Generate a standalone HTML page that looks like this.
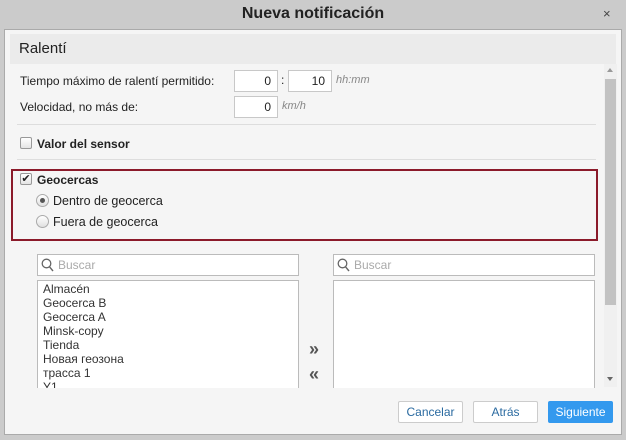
<!DOCTYPE html>
<html><head><meta charset="utf-8"><style>
*{box-sizing:border-box}
body{margin:0;width:626px;height:440px;background:#cbcbcb;font-family:"Liberation Sans",Arial,sans-serif;font-size:12px;color:#222;position:relative;overflow:hidden}
.a{position:absolute}
.title{left:0;top:0;width:626px;height:28px;text-align:center;font-weight:bold;font-size:16px;line-height:28px;color:#222}
.panel{left:4px;top:29px;width:618px;height:406px;background:#f5f5f5;border:1px solid #aaa}
.inp{background:#fff;border:1px solid #c8c8c8;height:22px;text-align:right;padding-right:6px;line-height:20px;font-size:12px}
.unit{color:#888;font-style:italic;font-size:11px}
.sep{height:1px;background:#ddd}
.cb{width:12px;height:12px;border:1px solid #999;border-radius:2px;background:linear-gradient(#fff,#e4e4e4)}
.rd{width:13px;height:13px;border:1px solid #aaa;border-radius:50%;background:linear-gradient(#fff,#e0e0e0)}
.btn{height:22px;border:1px solid #ccc;background:#fff;color:#2a6aa0;text-align:center;line-height:20px;font-size:12px;border-radius:2px}
.list div{height:14px;line-height:14px}
</style></head><body>
<div class="a title">Nueva notificación</div>
<div class="a" style="left:603px;top:6px;font-size:13px;color:#444">×</div>
<div class="a panel"></div>
<div class="a" style="left:10px;top:34px;width:606px;height:30px;background:#ebebeb;font-size:15px;line-height:30px;padding-left:9px">Ralentí</div>
<div class="a" style="left:604px;top:64px;width:13px;height:323px;background:#f0f0f0"></div>
<div class="a" style="left:605px;top:79px;width:11px;height:226px;background:#c2c2c2"></div>
<div class="a" style="left:607px;top:68px;border:3px solid transparent;border-bottom:4px solid #999;border-top:0"></div>
<div class="a" style="left:607px;top:377px;border:3px solid transparent;border-top:4px solid #666;border-bottom:0"></div>

<div class="a" style="left:20px;top:74px">Tiempo máximo de ralentí permitido:</div>
<div class="a inp" style="left:234px;top:70px;width:44px">0</div>
<div class="a" style="left:281px;top:73px">:</div>
<div class="a inp" style="left:288px;top:70px;width:44px">10</div>
<div class="a unit" style="left:336px;top:74px">hh:mm</div>
<div class="a" style="left:20px;top:100px">Velocidad, no más de:</div>
<div class="a inp" style="left:234px;top:96px;width:44px">0</div>
<div class="a unit" style="left:282px;top:100px">km/h</div>
<div class="a sep" style="left:17px;top:124px;width:579px"></div>
<div class="a cb" style="left:20px;top:137px"></div>
<div class="a" style="left:37px;top:137px;font-weight:bold">Valor del sensor</div>
<div class="a sep" style="left:17px;top:159px;width:579px"></div>

<div class="a" style="left:11px;top:169px;width:587px;height:72px;border:2px solid #8b1a2a"></div>
<div class="a cb" style="left:20px;top:173px;font-size:11px;line-height:10px;text-align:center">✔</div>
<div class="a" style="left:37px;top:173px;font-weight:bold">Geocercas</div>
<div class="a rd" style="left:36px;top:194px"><div style="width:5px;height:5px;border-radius:50%;background:#555;margin:3px"></div></div>
<div class="a" style="left:53px;top:194px;font-size:12.5px">Dentro de geocerca</div>
<div class="a rd" style="left:36px;top:215px"></div>
<div class="a" style="left:53px;top:215px;font-size:12.5px">Fuera de geocerca</div>

<div class="a" style="left:37px;top:254px;width:262px;height:22px;background:#fff;border:1px solid #bbb;color:#aaa;line-height:20px;padding-left:20px">Buscar</div>
<svg class="a" style="left:41px;top:258px" width="13" height="14"><circle cx="5.5" cy="5.5" r="4.3" fill="none" stroke="#666" stroke-width="1.3"/><line x1="8.5" y1="8.8" x2="12" y2="13" stroke="#666" stroke-width="1.4"/></svg>
<div class="a" style="left:333px;top:254px;width:262px;height:22px;background:#fff;border:1px solid #bbb;color:#aaa;line-height:20px;padding-left:20px">Buscar</div>
<svg class="a" style="left:337px;top:258px" width="13" height="14"><circle cx="5.5" cy="5.5" r="4.3" fill="none" stroke="#666" stroke-width="1.3"/><line x1="8.5" y1="8.8" x2="12" y2="13" stroke="#666" stroke-width="1.4"/></svg>
<div class="a list" style="left:37px;top:280px;width:262px;height:108px;background:#fff;border:1px solid #bbb;border-bottom:0;padding:1px 0 0 5px;overflow:hidden;color:#333">
<div>Almacén</div><div>Geocerca B</div><div>Geocerca A</div><div>Minsk-copy</div><div>Tienda</div><div>Новая геозона</div><div>трасса 1</div><div>Y1</div></div>
<div class="a" style="left:333px;top:280px;width:262px;height:108px;background:#fff;border:1px solid #bbb;border-bottom:0"></div>
<div class="a" style="left:309px;top:339px;font-size:18px;font-weight:bold;color:#555">»</div>
<div class="a" style="left:309px;top:364px;font-size:18px;font-weight:bold;color:#555">«</div>

<div class="a btn" style="left:398px;top:401px;width:65px">Cancelar</div>
<div class="a btn" style="left:473px;top:401px;width:65px">Atrás</div>
<div class="a btn" style="left:548px;top:401px;width:65px;background:#3399ee;border-color:#3399ee;color:#fff">Siguiente</div>
</body></html>
